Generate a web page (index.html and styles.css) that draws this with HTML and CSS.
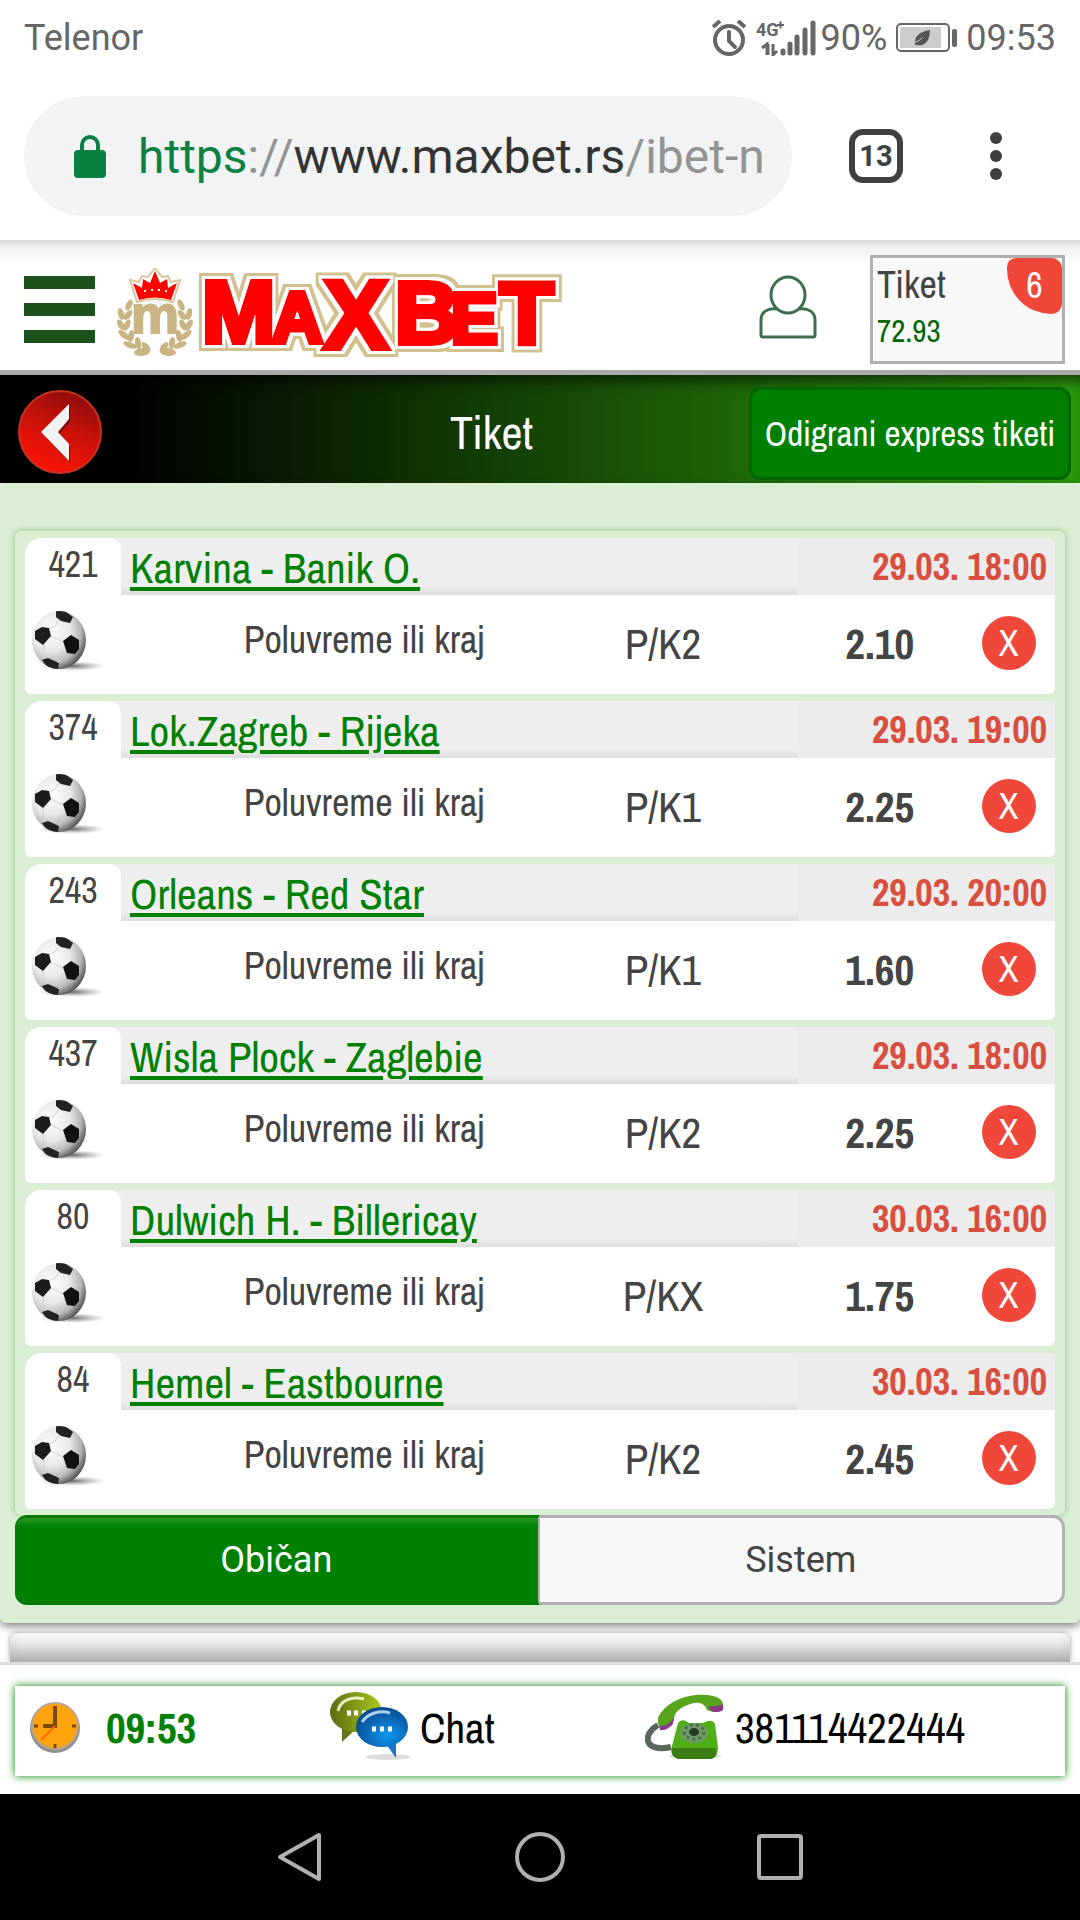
FILE: index.html
```html
<!DOCTYPE html>
<html lang="sr">

<head>
    <meta charset="UTF-8">
    <meta name="viewport" content="width=device-width, initial-scale=1.0">
    <title>MaxBet - Tiket</title>
    <link rel="stylesheet" href="styles.css">
</head>

<body>
    <!-- shared pictures -->
    <svg class="defs" width="0" height="0" aria-hidden="true">
        <defs>
            <radialGradient id="ballFill" cx="35%" cy="35%" r="70%">
                <stop offset="0" stop-color="#fff" />
                <stop offset="0.5" stop-color="#e8e8e8" />
                <stop offset="0.8" stop-color="#b4b4b4" />
                <stop offset="1" stop-color="#555" />
            </radialGradient>
            <radialGradient id="ballShadow">
                <stop offset="0" stop-color="#555" stop-opacity="0.9" />
                <stop offset="1" stop-color="#999" stop-opacity="0" />
            </radialGradient>
            <clipPath id="ballClip">
                <ellipse cx="29" cy="29" rx="27" ry="29" />
            </clipPath>
        </defs>
        <symbol id="ball" viewBox="0 0 78 60">
            <ellipse cx="42" cy="55" rx="34" ry="5" fill="url(#ballShadow)" />
            <ellipse cx="29" cy="29" rx="27" ry="29" fill="url(#ballFill)" />
            <g clip-path="url(#ballClip)">
                <path d="M26 0l9 0 8 6-3 6-9-2-5-4z" fill="#222" />
                <path d="M5 20l7-4 7 1 2 8-8 9-8-6z" fill="#1c1c1c" />
                <path d="M33 30l8-6 8 5 0 9-4 5-8-1z" fill="#111" />
                <path d="M12 49l6-2 11 5-1 7-9 0z" fill="#222" />
                <path d="M29 9l-4 6-6 3M21 25l12 6M13 34l2 14M36 42l-8 10" fill="none" stroke="#d0d0d0" stroke-width="1" />
            </g>
        </symbol>
    </svg>

    <!-- phone status bar -->
    <div class="status">
        <span class="carrier">Telenor</span>
        <svg class="alarm" width="34" height="36" viewBox="0 0 34 36" fill="none" stroke="#666" stroke-width="4" aria-hidden="true">
            <circle cx="17" cy="20" r="14" />
            <path d="M17 12v9l6 6" stroke-linecap="round" />
            <path d="M1 7l7-6M33 7l-7-6" />
        </svg>
        <svg class="signal" width="60" height="36" viewBox="0 0 60 36" aria-hidden="true">
            <text x="0" y="16" class="net">4G</text>
            <path d="M21 5h7M24.500 1.500v7" stroke="#666" stroke-width="2" />
            <path d="M6 28l5-4v11M12 35v-11M17 24v11l4-4" fill="none" stroke="#666" stroke-width="3" />
            <path d="M27 31v2M34 24v9M41 17v16M49 10v23M57 3v30" stroke="#666" stroke-width="5" stroke-linecap="round" />
        </svg>
        <span class="percent">90%</span>
        <svg class="battery" width="61" height="30" viewBox="0 0 61 30" aria-hidden="true">
            <rect x="1" y="1" width="52" height="27" rx="4" fill="none" stroke="#666" stroke-width="2" />
            <rect x="4" y="4" width="41" height="21" fill="#ccc" />
            <rect x="56" y="6" width="5" height="18" rx="2" fill="#666" />
            <path d="M19 22c-1-9 4-13 15-15 0 9-4 17-13 15z" fill="#555" />
            <path d="M19 19c4-1 6-3 8-5" stroke="#ccc" fill="none" />
        </svg>
        <span class="time">09:53</span>
    </div>

    <!-- browser bar -->
    <div class="browser">
        <div class="address">
            <svg width="32" height="43" viewBox="0 0 32 43" aria-hidden="true">
                <rect x="0" y="15" width="32" height="28" rx="4" fill="#0b8043" />
                <path d="M8 16v-6a8 8 0 0 1 16 0v6" fill="none" stroke="#0b8043" stroke-width="4" />
            </svg>
            <div class="url" role="textbox" aria-label="Adresa"><span class="secure">https</span><span class="dim">://</span>www.maxbet.rs<span class="dim">/ibet-n</span></div>
        </div>
        <button class="tabs_count" type="button">13</button>
        <button class="more" type="button" aria-label="Meni pregledača">
            <svg width="12" height="48" viewBox="0 0 12 48" fill="#3c4043">
                <circle cx="6" cy="6" r="6" />
                <circle cx="6" cy="24" r="6" />
                <circle cx="6" cy="42" r="6" />
            </svg>
        </button>
    </div>

    <!-- site header -->
    <header class="header">
        <button class="menu" type="button" aria-label="Meni">
            <span></span>
            <span></span>
            <span></span>
        </button>
        <a class="logo" href="#" aria-label="MaxBet">
            <svg width="454" height="100" viewBox="0 0 454 100">
                <defs>
                    <!-- red face, white rim, gold rim -->
                    <filter id="rims" x="-5%" y="-20%" width="110%" height="140%">
                        <feMorphology in="SourceAlpha" operator="dilate" radius="6" result="outer" />
                        <feFlood flood-color="#d3c08f" />
                        <feComposite in2="outer" operator="in" result="gold" />
                        <feMorphology in="SourceAlpha" operator="dilate" radius="3" result="inner" />
                        <feFlood flood-color="#fff" />
                        <feComposite in2="inner" operator="in" result="white" />
                        <feMerge>
                            <feMergeNode in="gold" />
                            <feMergeNode in="white" />
                            <feMergeNode in="SourceGraphic" />
                        </feMerge>
                    </filter>
                </defs>
                <!-- crown -->
                <path d="M13 12l9 2 3-6 6 1 7-9 7 9 6-1 3 6 9-2-7 22q-18-6-36 0z" fill="#fff" stroke="#d9c79a" stroke-width="2" />
                <path d="M16 15l9 5 1-9 7 4 5-12 5 12 7-4 1 9 9-5-6 17q-16-5-32 0z" fill="#f00" />
                <path d="M27 23h2M34 22h2M41 22h2M48 23h2" stroke="#fff" stroke-width="2" />
                <!-- wreath -->
                <g id="branch" fill="#c9b583">
                    <ellipse cx="12" cy="37" rx="3" ry="6" transform="rotate(25 12 37)" />
                    <ellipse cx="4" cy="46" rx="3" ry="6" transform="rotate(-15 4 46)" />
                    <ellipse cx="11" cy="47" rx="3" ry="6" transform="rotate(40 11 47)" />
                    <ellipse cx="4" cy="57" rx="3" ry="6" transform="rotate(-30 4 57)" />
                    <ellipse cx="10" cy="57" rx="3" ry="6" transform="rotate(25 10 57)" />
                    <ellipse cx="7" cy="67" rx="3" ry="7" transform="rotate(-50 7 67)" />
                    <ellipse cx="14" cy="68" rx="3" ry="6" transform="rotate(10 14 68)" />
                    <ellipse cx="13" cy="77" rx="3" ry="7" transform="rotate(-70 13 77)" />
                    <ellipse cx="21" cy="75" rx="3" ry="6" transform="rotate(-10 21 75)" />
                    <ellipse cx="25" cy="84" rx="4" ry="8" transform="rotate(-95 25 84)" />
                    <ellipse cx="29" cy="79" rx="3" ry="6" transform="rotate(-40 29 79)" />
                </g>
                <use href="#branch" transform="translate(76 0) scale(-1 1)" />
                <text class="logo_m" x="38" y="65" text-anchor="middle">m</text>
                <text class="word" filter="url(#rims)"><tspan x="85" y="74" class="narrow big">M</tspan><tspan x="155" y="74" class="small">A</tspan><tspan x="207" y="80" class="large">X</tspan><tspan x="278" y="75" class="narrow big">B</tspan><tspan x="334" y="75" class="small">E</tspan><tspan x="383" y="75" class="big">T</tspan></text>
            </svg>
        </a>
        <a class="user" href="#" aria-label="Nalog">
            <svg width="58" height="64" viewBox="0 0 58 64" fill="none" stroke="#3d6e4e" stroke-width="3">
                <ellipse cx="29" cy="20" rx="17" ry="18" />
                <path d="M18 34c-10-1-16 3-16 11v15q0 2 2 2h50q2 0 2-2v-15c0-8-6-12-16-11" />
            </svg>
        </a>
        <a class="slip" href="#">
            <span class="slip_name">Tiket</span>
            <span class="slip_odds">72.93</span>
            <span class="badge">6</span>
        </a>
    </header>

    <div class="bar">
        <button class="back" type="button" aria-label="Nazad">
            <svg width="86" height="86" viewBox="0 0 86 86">
                <defs>
                    <linearGradient id="backFill" x1="0.700" y1="0" x2="0.300" y2="1">
                        <stop offset="0" stop-color="#8c0c0c" />
                        <stop offset="0.500" stop-color="#cf120a" />
                        <stop offset="1" stop-color="#ff1408" />
                    </linearGradient>
                </defs>
                <circle cx="43" cy="43" r="41" fill="url(#backFill)" stroke="#c8321e" stroke-width="2" />
                <path d="M53 18v15l-10 11 10 13v17l-28-30z" fill="#500" opacity="0.6" />
                <path d="M52 15v15l-11 13 11 12v17l-28-29z" fill="#f2f2f2" />
            </svg>
        </button>
        <h1 class="title">Tiket</h1>
        <button class="express" type="button">Odigrani express tiketi</button>
    </div>

    <main class="ticket">
        <ul class="matches">
            <li class="match">
                <div class="code">421<svg width="78" height="60"><use href="#ball" /></svg></div>
                <div class="teams"><a href="#">Karvina - Banik O.</a></div>
                <div class="date">29.03. 18:00</div>
                <div class="bet">
                    <span class="game">Poluvreme ili kraj</span>
                    <span class="pick">P/K2</span>
                    <span class="odds">2.10</span>
                    <button class="remove" type="button">X</button>
                </div>
            </li>
            <li class="match">
                <div class="code">374<svg width="78" height="60"><use href="#ball" /></svg></div>
                <div class="teams"><a href="#">Lok.Zagreb - Rijeka</a></div>
                <div class="date">29.03. 19:00</div>
                <div class="bet">
                    <span class="game">Poluvreme ili kraj</span>
                    <span class="pick">P/K1</span>
                    <span class="odds">2.25</span>
                    <button class="remove" type="button">X</button>
                </div>
            </li>
            <li class="match">
                <div class="code">243<svg width="78" height="60"><use href="#ball" /></svg></div>
                <div class="teams"><a href="#">Orleans - Red Star</a></div>
                <div class="date">29.03. 20:00</div>
                <div class="bet">
                    <span class="game">Poluvreme ili kraj</span>
                    <span class="pick">P/K1</span>
                    <span class="odds">1.60</span>
                    <button class="remove" type="button">X</button>
                </div>
            </li>
            <li class="match">
                <div class="code">437<svg width="78" height="60"><use href="#ball" /></svg></div>
                <div class="teams"><a href="#">Wisla Plock - Zaglebie</a></div>
                <div class="date">29.03. 18:00</div>
                <div class="bet">
                    <span class="game">Poluvreme ili kraj</span>
                    <span class="pick">P/K2</span>
                    <span class="odds">2.25</span>
                    <button class="remove" type="button">X</button>
                </div>
            </li>
            <li class="match">
                <div class="code">80<svg width="78" height="60"><use href="#ball" /></svg></div>
                <div class="teams"><a href="#">Dulwich H. - Billericay</a></div>
                <div class="date">30.03. 16:00</div>
                <div class="bet">
                    <span class="game">Poluvreme ili kraj</span>
                    <span class="pick">P/KX</span>
                    <span class="odds">1.75</span>
                    <button class="remove" type="button">X</button>
                </div>
            </li>
            <li class="match">
                <div class="code">84<svg width="78" height="60"><use href="#ball" /></svg></div>
                <div class="teams"><a href="#">Hemel - Eastbourne</a></div>
                <div class="date">30.03. 16:00</div>
                <div class="bet">
                    <span class="game">Poluvreme ili kraj</span>
                    <span class="pick">P/K2</span>
                    <span class="odds">2.45</span>
                    <button class="remove" type="button">X</button>
                </div>
            </li>
        </ul>
        <div class="types">
            <button class="type active" type="button">Običan</button>
            <button class="type" type="button">Sistem</button>
        </div>
    </main>

    <!-- top edge of the next panel -->
    <div class="next"></div>

    <footer class="footer">
        <div class="contact">
            <div class="clock">
                <svg width="54" height="54" viewBox="0 0 54 54" aria-hidden="true">
                    <circle cx="27" cy="28" r="25" fill="#8f8f8f" />
                    <circle cx="27" cy="26" r="24" fill="#b9a58a" />
                    <circle cx="27" cy="26" r="22" fill="#ffa40c" />
                    <path d="M27 6v20H15" fill="none" stroke="#7a4a06" stroke-width="4" />
                    <path d="M27 26L13 40" stroke="#f60" stroke-width="2" />
                    <path d="M27 44v4M6 26h4M44 26h4" stroke="#7a4a06" stroke-width="3" />
                </svg>
                <span>09:53</span>
            </div>
            <a class="chat" href="#">
                <svg width="80" height="72" viewBox="0 0 80 72" aria-hidden="true">
                    <defs>
                        <linearGradient id="chatGreen" x1="0" y1="0" x2="1" y2="0">
                            <stop offset="0" stop-color="#5c6b12" />
                            <stop offset="1" stop-color="#a9cb1c" />
                        </linearGradient>
                        <radialGradient id="chatBlue" cx="60%" cy="70%" r="65%">
                            <stop offset="0" stop-color="#0d97f2" />
                            <stop offset="1" stop-color="#0a4d92" />
                        </radialGradient>
                    </defs>
                    <ellipse cx="58" cy="66" rx="22" ry="3" fill="#ddd" />
                    <path d="M12 34v17l14-13z" fill="#65751a" />
                    <ellipse cx="26" cy="21" rx="26" ry="20" fill="url(#chatGreen)" />
                    <path d="M8 20c2-10 12-15 26-12" fill="none" stroke="#e4f0b8" stroke-width="3" />
                    <path d="M17 22h4M24 22h4M32 22h4" stroke="#fff" stroke-width="5" />
                    <path d="M56 53l10 14V52z" fill="#1479cc" />
                    <ellipse cx="52" cy="36" rx="26" ry="20" fill="url(#chatBlue)" />
                    <path d="M32 31c6-9 18-12 28-9" fill="none" stroke="#a8cfee" stroke-width="3" />
                    <path d="M42 38h4M50 38h4M58 38h4" stroke="#fff" stroke-width="5" />
                </svg>
                <span>Chat</span>
            </a>
            <a class="phone" href="tel:381114422444">
                <svg width="80" height="68" viewBox="0 0 80 68" aria-hidden="true">
                    <ellipse cx="50" cy="63" rx="26" ry="3" fill="#ddd" />
                    <path d="M13 32C-4 42 0 60 26 54" fill="none" stroke="#59665a" stroke-width="6" />
                    <path d="M13 25C20 8 46-2 68 3c10 2 11 8 10 14-6 3-12 2-16 0-3-9-12-9-22-4-8 4-11 8-11 14l-3 6c-5 3-11 1-13-2z" fill="#57a51c" />
                    <path d="M78 11c-4 2-10 3-15 2l3 5c4 2 10 1 12-1zM14 32c5 2 10 0 15-8l-1 7c-4 4-8 7-13 6z" fill="#8a3a86" />
                    <path d="M33 30q3-4 8-2l3 2h14l5-2q5-1 7 3l3 24q0 10-8 11H34q-8-2-8-9z" fill="#4fae16" />
                    <path d="M27 55h44v7q-2 4-6 4H33q-5-2-6-6z" fill="#3c7d14" />
                    <ellipse cx="49" cy="40" rx="14" ry="10" fill="#6f9c66" />
                    <ellipse cx="49" cy="39" rx="10" ry="7" fill="none" stroke="#4a6f44" stroke-width="3" stroke-dasharray="3 3" />
                    <ellipse cx="49" cy="39" rx="5" ry="4" fill="#263a28" />
                </svg>
                <span>381114422444</span>
            </a>
        </div>
    </footer>

    <!-- android buttons -->
    <nav class="keys">
        <button type="button" aria-label="Nazad">
            <svg width="50" height="52" viewBox="0 0 50 52"><path d="M44 4v44L5 26z" /></svg>
        </button>
        <button type="button" aria-label="Početna">
            <svg width="50" height="52" viewBox="0 0 50 52"><circle cx="25" cy="26" r="23" /></svg>
        </button>
        <button type="button" aria-label="Nedavne aplikacije">
            <svg width="50" height="52" viewBox="0 0 50 52"><rect x="4" y="5" width="42" height="42" rx="2" /></svg>
        </button>
    </nav>
</body>

</html>
```
FILE: styles.css
```css
* {
    box-sizing: border-box;
}

body {
    display: flex;
    flex-direction: column;
    min-height: 100vh;
    margin: 0;
    background-color: #fff;
    color: #444;
    font-family: "Archivo Narrow", "Liberation Sans Narrow", "Arial Narrow", "Liberation Sans", sans-serif;
    font-size: 43px;
}

button {
    padding: 0;
    border: 0;
    background: none;
    color: inherit;
    font-family: inherit;
}

a {
    color: inherit;
    text-decoration: none;
}

svg {
    display: block;
    flex-shrink: 0;
}

.defs {
    position: absolute;
}

/* status bar */
.status {
    display: flex;
    align-items: center;
    height: 72px;
    padding: 4px 24px 0;
    color: #666;
    font-family: Roboto, sans-serif;
    font-size: 36px;
}

.carrier {
    flex: 1;
}

.signal {
    margin: 0 5px 0 10px;
}

.net {
    fill: #666;
    font-size: 18px;
    font-weight: 700;
}

.battery {
    margin: 0 9px;
}

/* browser bar */
.browser {
    display: flex;
    align-items: center;
    height: 168px;
    padding: 0 78px 0 24px;
}

.address {
    display: flex;
    flex: 1;
    align-items: center;
    gap: 32px;
    height: 120px;
    min-width: 0;
    padding: 0 30px 0 50px;
    border-radius: 60px;
    background-color: #f1f3f4;
}

.url {
    flex: 1;
    overflow: hidden;
    white-space: nowrap;
    color: #333;
    font-family: Roboto, sans-serif;
    font-size: 48px;
}

.secure {
    color: #0b8043;
}

.dim {
    color: #939393;
}

.tabs_count {
    width: 54px;
    height: 54px;
    margin: 0 87px 0 57px;
    border: 6px solid #3c4043;
    border-radius: 14px;
    color: #3c4043;
    font-family: Roboto, sans-serif;
    font-size: 29px;
    font-weight: 700;
}

/* site header */
.header {
    display: flex;
    height: 135px;
    padding: 15px 15px 0 24px;
    border-bottom: 5px solid #aaa;
    background: linear-gradient(#d8d8d8, #f2f2f2 8px, #fff 24px);
}

.menu {
    display: flex;
    flex-direction: column;
    gap: 14px;
    width: 71px;
    padding-top: 21px;
}

.menu span {
    height: 13px;
    background-color: #1b521b;
}

.logo {
    flex: 1;
    padding: 13px 0 0 22px;
}

.logo_m {
    fill: #c9b583;
    stroke: #c9b583;
    stroke-width: 2px;
    font-family: "Liberation Sans Narrow", "Liberation Sans", sans-serif;
    font-size: 54px;
    font-weight: 700;
}

.word {
    fill: #f00;
    stroke: #f00;
    stroke-width: 6px;
    stroke-linejoin: miter;
    stroke-miterlimit: 3;
    font-family: "Liberation Sans", sans-serif;
    font-weight: 700;
}

.word .narrow {
    font-family: "Liberation Sans Narrow", "Liberation Sans", sans-serif;
}

.word .big {
    font-size: 88px;
}

.word .small {
    font-size: 70px;
}

.word .large {
    font-size: 96px;
}

.user {
    padding: 20px 53px 0 0;
}

.slip {
    position: relative;
    display: flex;
    flex-direction: column;
    width: 195px;
    height: 109px;
    padding-left: 4px;
    border: 3px solid #b0b0b0;
    background-color: #f8f8f8;
}

.slip_name {
    font-size: 38px;
    line-height: 54px;
}

.slip_odds {
    color: #006400;
    font-size: 31px;
    line-height: 38px;
}

.badge {
    position: absolute;
    top: 0;
    right: 0;
    width: 55px;
    height: 56px;
    border-radius: 12px 14px 14px 60px;
    background-color: #ef483a;
    color: #fff;
    font-size: 36px;
    line-height: 54px;
    text-align: center;
}

/* green title bar */
.bar {
    display: flex;
    align-items: flex-end;
    height: 108px;
    padding: 0 9px 3px 0;
    background: linear-gradient(to right, #000 11%, #184d06 54%, #1f6d0a 72%, #2a9a0d);
    box-shadow: inset 0 14px 14px -8px rgba(0, 0, 0, 0.6);
    color: #fff;
}

.back {
    display: flex;
    align-items: center;
    justify-content: center;
    width: 119px;
    height: 97px;
}

.title {
    flex: 1;
    margin: 0;
    padding-left: 115px;
    font-size: 46px;
    font-weight: 400;
    line-height: 95px;
    text-align: center;
}

.express {
    width: 322px;
    height: 93px;
    border: 3px solid #006400;
    border-radius: 12px;
    background-color: #008000;
    font-size: 35px;
}

/* ticket */
.ticket {
    position: relative;
    padding: 48px 15px 18px;
    border-radius: 6px;
    background-color: #daeed4;
    box-shadow: 0 3px 8px rgba(0, 0, 0, 0.5);
}

.matches {
    display: flex;
    flex-direction: column;
    gap: 7px;
    margin: 0;
    padding: 7px 10px 6px;
    border-radius: 6px;
    box-shadow: 0 0 6px rgba(0, 128, 0, 0.4);
    list-style: none;
}

.match {
    display: grid;
    grid-template-columns: 96px 1fr 257px;
    grid-template-rows: 57px 99px;
    overflow: hidden;
    border-radius: 16px 6px 6px 6px;
    background: linear-gradient(#eee, #eee) top / 100% 57px no-repeat #fff;
}

.code {
    grid-row: 1 / 3;
    border-radius: 16px 12px 0 0;
    background-color: #fff;
    font-size: 36px;
    line-height: 53px;
    text-align: center;
}

.code svg {
    margin: 20px 0 0 5px;
}

.teams {
    padding: 2px 0 0 9px;
    background: linear-gradient(#eee 48px, #ddd);
    color: #008000;
    font-size: 43px;
    line-height: 55px;
}

.teams a {
    text-decoration: underline;
    text-decoration-thickness: 4px;
    text-underline-offset: 4px;
}

.date {
    padding: 0 8px 0 0;
    background-color: #ececec;
    color: #d84f3f;
    font-size: 38px;
    font-weight: 700;
    line-height: 57px;
    text-align: right;
}

.bet {
    display: grid;
    grid-column: 2 / 4;
    grid-template-columns: 486fr 112fr 243fr 93fr;
    align-items: center;
    height: 95px;
    text-align: center;
}

.game {
    padding-bottom: 6px;
    font-size: 38px;
}

.odds {
    padding-right: 48px;
    font-size: 43px;
    font-weight: 700;
    text-align: right;
}

.remove {
    justify-self: center;
    width: 54px;
    height: 54px;
    border-radius: 50%;
    background-color: #ef483a;
    color: #fff;
    font-size: 36px;
}

.types {
    position: relative;
    display: flex;
}

.type {
    flex: 1;
    height: 90px;
    border: 3px solid #b0b0b0;
    border-left: 0;
    border-radius: 0 12px 12px 0;
    background-color: #f8f8f8;
    font-family: Roboto, sans-serif;
    font-size: 36px;
}

.type.active {
    border-color: #007a00;
    border-right: 2px solid #b0b0b0;
    border-radius: 12px 0 0 12px;
    background: linear-gradient(#2a962a, #008000 8px);
    color: #fff;
}

.next {
    height: 29px;
    margin: 10px 10px 0;
    border-radius: 6px 6px 0 0;
    background-color: #fff;
    box-shadow: 0 0 5px rgba(0, 0, 0, 0.4), inset 0 -24px 24px -14px rgba(0, 0, 0, 0.4);
}

/* bottom line */
.footer {
    position: relative;
    flex: 1;
    padding: 21px 15px 18px;
    border-top: 3px solid #ddd;
    background-color: #fff;
}

.contact {
    display: flex;
    align-items: center;
    height: 90px;
    padding-bottom: 8px;
    box-shadow: 0 0 8px #008000;
    color: #000;
}

.contact div,
.contact a {
    display: flex;
    align-items: center;
    gap: 10px;
}

.contact .clock {
    flex: 0 0 30%;
    gap: 24px;
    padding-left: 13px;
    color: #008000;
    font-weight: 700;
}

.chat {
    flex: 0 0 30%;
}

.keys {
    display: flex;
    align-items: center;
    justify-content: center;
    gap: 190px;
    height: 126px;
    background-color: #000;
}

.keys svg {
    fill: none;
    stroke: #b0b0b0;
    stroke-width: 4px;
    stroke-linejoin: round;
}
```
